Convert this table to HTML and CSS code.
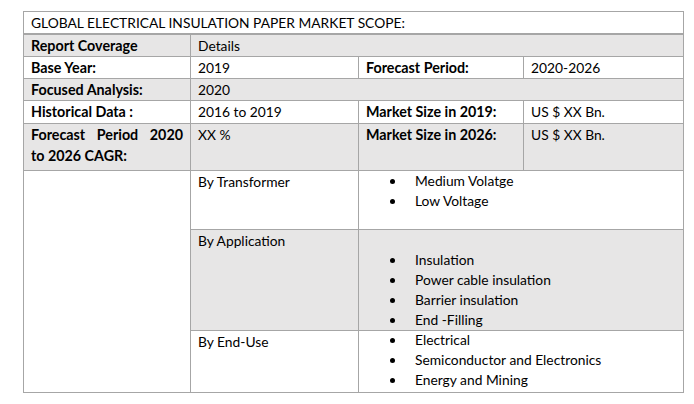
FILE: index.html
```html
<!DOCTYPE html>
<html>
<head>
<meta charset="utf-8">
<link rel="stylesheet" href="styles.css">
</head>
<body>
<table class="scope">
  <colgroup>
    <col class="c1"><col class="c2"><col class="c3"><col class="c4">
  </colgroup>
  <tr class="r-title"><td colspan="4" class="title">GLOBAL ELECTRICAL INSULATION PAPER MARKET SCOPE:</td></tr>
  <tr class="r-single shade"><th>Report Coverage</th><td colspan="3">Details</td></tr>
  <tr class="r-single"><th>Base Year:</th><td>2019</td><th>Forecast Period:</th><td>2020-2026</td></tr>
  <tr class="r-single shade"><th>Focused Analysis:</th><td colspan="3">2020</td></tr>
  <tr class="r-hist"><th>Historical Data :</th><td>2016 to 2019</td><th>Market Size in 2019:</th><td>US $ XX Bn.</td></tr>
  <tr class="r-forecast shade"><th class="just">Forecast Period 2020 to 2026 CAGR:</th><td>XX %</td><th>Market Size in 2026:</th><td>US $ XX Bn.</td></tr>
  <tr class="r-trans">
    <td rowspan="3" class="blank"></td>
    <td>By Transformer</td>
    <td colspan="2">
      <ul class="bullets">
        <li>Medium Volatge</li>
        <li>Low Voltage</li>
      </ul>
    </td>
  </tr>
  <tr class="r-app shade">
    <td>By Application</td>
    <td colspan="2">
      <ul class="bullets gap">
        <li>Insulation</li>
        <li>Power cable insulation</li>
        <li>Barrier insulation</li>
        <li>End -Filling</li>
      </ul>
    </td>
  </tr>
  <tr class="r-end">
    <td>By End-Use</td>
    <td colspan="2">
      <ul class="bullets tight">
        <li>Electrical</li>
        <li>Semiconductor and Electronics</li>
        <li>Energy and Mining</li>
      </ul>
    </td>
  </tr>
</table>
</body>
</html>
```

FILE: styles.css
```css
html, body {
  margin: 0;
  padding: 0;
  background: #ffffff;
}

body {
  font-family: "Lato", "Open Sans", sans-serif;
  font-size: 13.8px;
  color: #000000;
}

.scope {
  margin: 11px 0 0 23px;
  border-collapse: collapse;
  table-layout: fixed;
  width: 660px;
}

.c1 { width: 167px; }
.c2 { width: 168px; }
.c3 { width: 165px; }
.c4 { width: 160px; }

.scope th,
.scope td {
  border: 1px solid #a6a6a6;
  padding: 0 7px;
  vertical-align: top;
  text-align: left;
  line-height: 21px;
  font-weight: 400;
}

.scope th {
  font-weight: 700;
  font-size: 14.3px;
}

.scope td.title {
  height: 21px;
  border-bottom: 2px solid #a6a6a6;
}

.shade th,
.shade td {
  background: #e7e6e6;
}

.r-single th, .r-single td { height: 21px; }
.r-hist th, .r-hist td { height: 22px; }
.r-forecast th, .r-forecast td { height: 46px; }
.r-trans td { height: 58px; }
.r-app td { height: 99px; }
.r-end td { height: 61px; }

.scope td.blank {
  background: #ffffff;
}

.just {
  text-align: justify !important;
  text-align-last: left;
}

.bullets {
  list-style: none;
  margin: 0;
  padding: 0 0 0 49px;
}

.bullets li {
  position: relative;
  line-height: 20px;
}

.bullets li::before {
  content: "";
  position: absolute;
  left: -25px;
  top: 8px;
  width: 5px;
  height: 5px;
  border-radius: 50%;
  background: #000000;
}

.bullets.gap {
  padding-top: 20px;
}

.bullets.tight {
  margin-top: -1px;
}
```
